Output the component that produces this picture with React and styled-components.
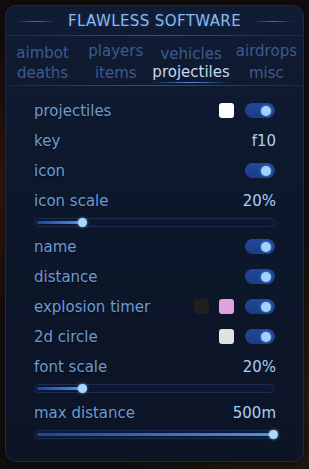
import React from 'react';
import styled, { createGlobalStyle } from 'styled-components';

const GlobalStyle = createGlobalStyle`
  html, body {
    margin: 0;
    padding: 0;
    background: #110d0c;
  }
  body {
    width: 309px;
    height: 469px;
    overflow: hidden;
    font-family: 'DejaVu Sans', Verdana, sans-serif;
    background:
      radial-gradient(circle at 0% 40%, rgba(90, 30, 20, 0.45), transparent 35%),
      radial-gradient(circle at 100% 85%, rgba(70, 50, 40, 0.35), transparent 40%),
      #120e0d;
  }
`;

const tabs = [
  { name: 'aimbot', lift: 0 },
  { name: 'players', lift: -2 },
  { name: 'vehicles', lift: 1 },
  { name: 'airdrops', lift: -2 },
  { name: 'deaths', lift: 0 },
  { name: 'items', lift: 0 },
  { name: 'projectiles', lift: -1, active: true },
  { name: 'misc', lift: 0 },
];

const Panel = styled.div`
  box-sizing: border-box;
  margin: 5px 0 0 5px;
  width: 299px;
  height: 457px;
  border: 1px solid #1c2a47;
  border-radius: 11px;
  background: linear-gradient(180deg, #101c34 0%, #0d172b 45%, #0c1426 100%);
  box-shadow: 0 0 6px rgba(0, 0, 0, 0.6);
  overflow: hidden;
`;

const Header = styled.div`
  height: 28px;
  padding-top: 1px;
  display: flex;
  align-items: center;
  justify-content: center;
  gap: 12px;
`;

const Deco = styled.span`
  width: 40px;
  height: 1px;
  background: linear-gradient(90deg, transparent, #3f6fc4 50%, transparent);
`;

const Title = styled.div`
  font-size: 15px;
  line-height: 27px;
  letter-spacing: 0.4px;
  white-space: nowrap;
  color: #8cb9ea;
  text-shadow: 0 0 4px rgba(60, 120, 220, 0.3);
`;

const Separator = styled.div`
  height: 1px;
  background: linear-gradient(90deg, rgba(40, 70, 130, 0.3), #2d5298 50%, rgba(40, 70, 130, 0.3));
`;

const TabGrid = styled.div`
  display: grid;
  grid-template-columns: repeat(4, 1fr);
  grid-auto-rows: 20px;
  padding: 7px 0 2px;
`;

const Tab = styled.div`
  position: relative;
  justify-self: center;
  font-size: 15px;
  line-height: 20px;
  white-space: nowrap;
  color: ${p => (p.$active ? '#c3dbf2' : '#3b5c8c')};
  transform: translateY(${p => p.$lift}px);

  &::after {
    content: '';
    display: ${p => (p.$active ? 'block' : 'none')};
    position: absolute;
    left: 0;
    right: 0;
    bottom: -1px;
    height: 1px;
    background: linear-gradient(90deg, transparent, #4f8ee8 50%, transparent);
  }
`;

const Body = styled.div`
  padding: 10px 28px 0;
  display: flex;
  flex-direction: column;
`;

const Row = styled.div`
  display: flex;
  align-items: center;
  height: 30px;
  gap: 10px;
`;

const Label = styled.span`
  flex: 1;
  font-size: 15px;
  line-height: 30px;
  color: #6b9bd3;
  text-shadow: 0 1px 1px rgba(0, 0, 0, 0.5);
`;

const Value = styled.span`
  font-size: 15px;
  line-height: 30px;
  color: #a9d0f4;
  margin-right: -1px;
`;

const Swatch = styled.span`
  width: 15px;
  height: 15px;
  border-radius: 3px;
  background: ${p => p.$color};
  margin-top: -1px;
`;

const Toggle = styled.span`
  position: relative;
  width: 30px;
  height: 15px;
  margin-left: 1px;
  border-radius: 8px;
  background: linear-gradient(180deg, #22469a, #1b3c86);
  margin-top: -1px;

  &::after {
    content: '';
    position: absolute;
    right: 4px;
    top: 3px;
    width: 10px;
    height: 10px;
    border-radius: 50%;
    background: #9fd2ff;
    box-shadow: 0 0 3px rgba(140, 200, 255, 0.7);
  }
`;

const SliderRow = styled.div`
  height: 16px;
  padding-top: 2px;
  box-sizing: border-box;
`;

const Track = styled.div`
  position: relative;
  box-sizing: border-box;
  height: 9px;
  border: 1px solid #1b2c4c;
  border-radius: 5px;
  background: #0d1731;
`;

const Fill = styled.div`
  position: absolute;
  left: 2px;
  top: 2px;
  height: 3px;
  border-radius: 2px;
  background: linear-gradient(90deg, #1a44a4, #4b92e6);
`;

const Knob = styled.div`
  position: absolute;
  top: -1px;
  width: 9px;
  height: 9px;
  margin-left: -4px;
  border-radius: 50%;
  background: #aad8ff;
  box-shadow: 0 0 3px rgba(150, 210, 255, 0.8);
`;

const Slider = ({ pct }) => (
  <SliderRow>
    <Track>
      <Fill style={{ width: `calc(${pct}% - 4px)` }} />
      <Knob style={{ left: `calc(${pct}% - 1px)` }} />
    </Track>
  </SliderRow>
);

const App = () => (
  <>
    <GlobalStyle />
    <Panel>
      <Header>
        <Deco />
        <Title>FLAWLESS SOFTWARE</Title>
        <Deco />
      </Header>
      <Separator />
      <TabGrid>
        {tabs.map(t => (
          <Tab key={t.name} $lift={t.lift} $active={t.active}>{t.name}</Tab>
        ))}
      </TabGrid>
      <Separator />
      <Body>
        <Row>
          <Label>projectiles</Label>
          <Swatch $color="#ffffff" />
          <Toggle />
        </Row>
        <Row>
          <Label>key</Label>
          <Value>f10</Value>
        </Row>
        <Row>
          <Label>icon</Label>
          <Toggle />
        </Row>
        <Row>
          <Label>icon scale</Label>
          <Value>20%</Value>
        </Row>
        <Slider pct={20} />
        <Row>
          <Label>name</Label>
          <Toggle />
        </Row>
        <Row>
          <Label>distance</Label>
          <Toggle />
        </Row>
        <Row>
          <Label>explosion timer</Label>
          <Swatch $color="#1f1f1f" />
          <Swatch $color="#e1a2dc" />
          <Toggle />
        </Row>
        <Row>
          <Label>2d circle</Label>
          <Swatch $color="#e2e2e2" />
          <Toggle />
        </Row>
        <Row>
          <Label>font scale</Label>
          <Value>20%</Value>
        </Row>
        <Slider pct={20} />
        <Row>
          <Label>max distance</Label>
          <Value>500m</Value>
        </Row>
        <Slider pct={100} />
      </Body>
    </Panel>
  </>
);

export default App;
